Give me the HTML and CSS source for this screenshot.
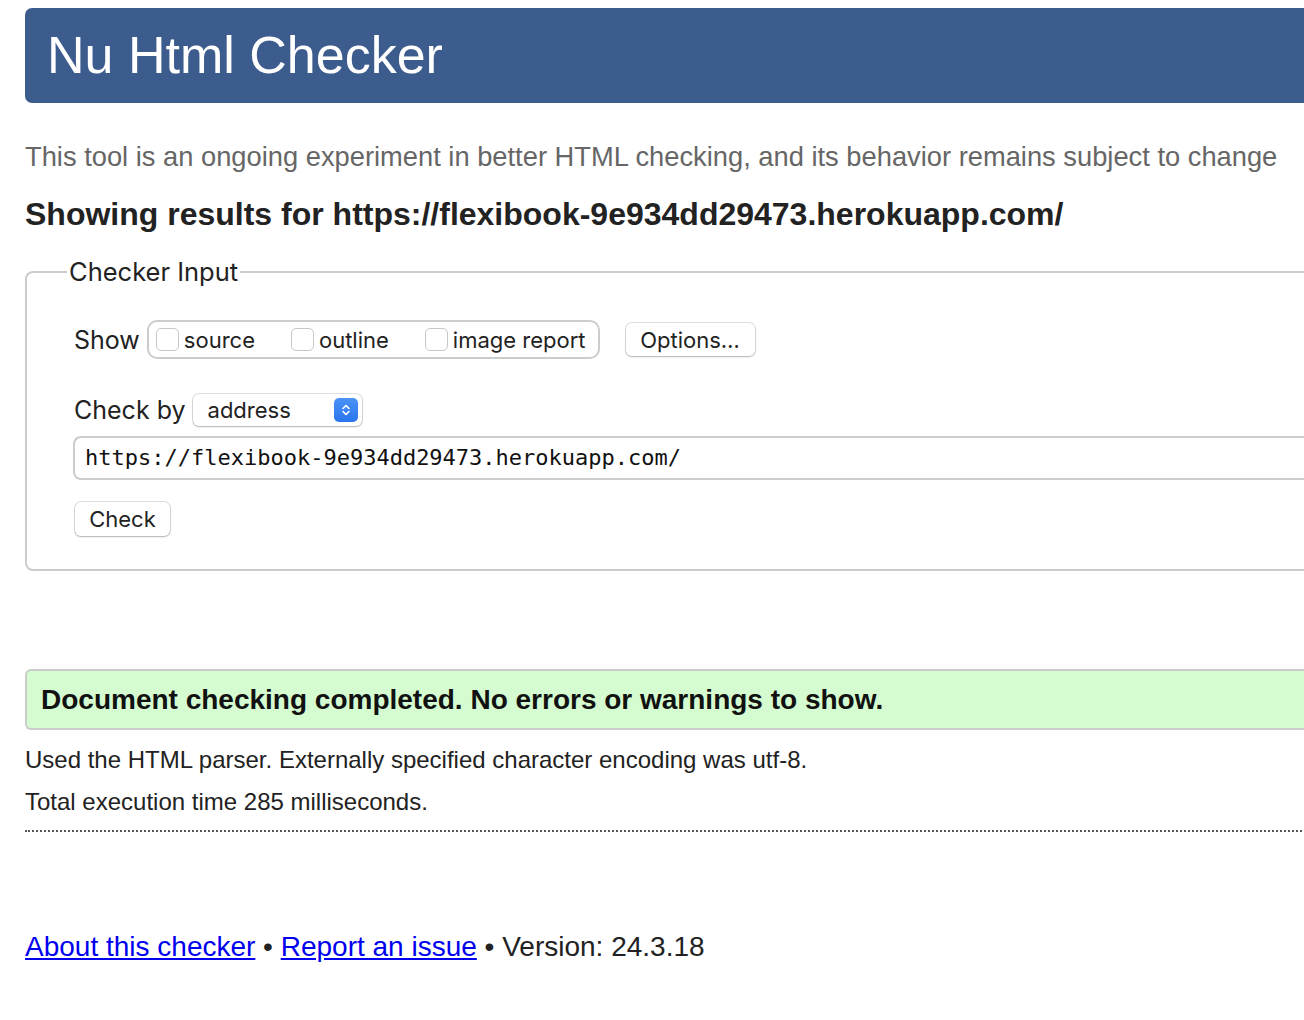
FILE: index.html
```html
<!DOCTYPE html>
<html>
<head>
<meta charset="utf-8">
<title>Nu Html Checker</title>
<link rel="stylesheet" href="styles.css">
</head>
<body>
<div class="page">
  <h1 class="banner">Nu Html Checker</h1>
  <p class="intro">This tool is an ongoing experiment in better HTML checking, and its behavior remains subject to change</p>
  <h2 class="showing">Showing results for https://flexibook-9e934dd29473.herokuapp.com/</h2>

  <fieldset class="input-set">
    <legend>Checker Input</legend>
    <div class="row show-row">
      <span class="label">Show</span>
      <span class="check-group">
        <label class="opt"><span class="box"></span>source</label>
        <label class="opt"><span class="box"></span>outline</label>
        <label class="opt"><span class="box"></span>image report</label>
      </span>
      <span class="btn options-btn">Options…</span>
    </div>
    <div class="row by-row">
      <span class="label">Check by</span>
      <span class="select">address
        <span class="sel-arrow"><svg width="10" height="14" viewBox="0 0 10 14"><path d="M2 5.5 L5 2.5 L8 5.5 M2 8.5 L5 11.5 L8 8.5" fill="none" stroke="#fff" stroke-width="1.6" stroke-linecap="round" stroke-linejoin="round"/></svg></span>
      </span>
    </div>
    <div class="url">https://flexibook-9e934dd29473.herokuapp.com/</div>
    <span class="btn check-btn">Check</span>
  </fieldset>

  <div class="success">Document checking completed. No errors or warnings to show.</div>
  <p class="details">Used the HTML parser. Externally specified character encoding was utf-8.</p>
  <p class="details">Total execution time 285 milliseconds.</p>
  <hr class="dotted">

  <p class="footer"><a href="#">About this checker</a> • <a href="#">Report an issue</a> • Version: 24.3.18</p>
</div>
</body>
</html>
```

FILE: styles.css
```css
html, body {
  margin: 0;
  padding: 0;
  overflow: hidden;
  background: #fff;
}
body {
  font-family: "Liberation Sans", Arial, sans-serif;
  color: #222;
}
.page {
  width: 1340px;
  padding: 8px 0 0 25px;
}
.banner {
  margin: 0;
  height: 95px;
  box-sizing: border-box;
  background: #3d5c8e;
  color: #fff;
  font-weight: normal;
  font-size: 52px;
  line-height: 95px;
  padding-left: 22px;
  border-radius: 7px 0 0 7px;
}
.intro {
  margin: 38px 0 0;
  font-size: 27.3px;
  line-height: 32px;
  color: #666;
}
.showing {
  margin: 23px 0 0;
  font-size: 32px;
  line-height: 36px;
  color: #222;
}
.input-set {
  margin: 24px 0 0;
  border: 2px solid #ccc;
  border-right: none;
  border-radius: 8px 0 0 8px;
  padding: 33px 0 0 47px;
  font-family: Inter, "Noto Sans", sans-serif;
  color: #222;
  height: 315px;
  box-sizing: border-box;
}
.input-set legend {
  font-size: 25.5px;
  padding: 0 2px;
  margin-left: -7px;
}
.row {
  display: flex;
  align-items: center;
}
.label {
  font-size: 25px;
  margin-right: 7px;
}
.check-group {
  display: flex;
  align-items: center;
  border: 2px solid #ccc;
  border-radius: 10px;
  height: 39px;
  box-sizing: border-box;
  padding: 0 12px 0 7px;
  font-size: 22px;
  gap: 36px;
}
.opt {
  display: flex;
  align-items: center;
}
.box {
  width: 23px;
  height: 23px;
  box-sizing: border-box;
  border: 1px solid #c8c8c8;
  border-radius: 5px;
  margin-right: 5px;
  background: #fff;
}
.btn {
  display: inline-flex;
  align-items: center;
  justify-content: center;
  background: #fff;
  border-radius: 6px;
  box-shadow: 0 0 0 1px rgba(0,0,0,0.12), 0 1px 2px rgba(0,0,0,0.2);
  font-size: 22px;
  height: 33px;
  box-sizing: border-box;
}
.options-btn {
  margin-left: 26px;
  width: 129px;
}
.by-row {
  margin-top: 35px;
}
.select {
  position: relative;
  display: inline-flex;
  align-items: center;
  width: 169px;
  height: 32px;
  box-sizing: border-box;
  padding-left: 15px;
  border-radius: 6px;
  box-shadow: 0 0 0 1px rgba(0,0,0,0.12), 0 1px 2px rgba(0,0,0,0.2);
  font-size: 22px;
}
.sel-arrow {
  position: absolute;
  right: 4px;
  top: 4px;
  width: 24px;
  height: 24px;
  border-radius: 5px;
  background: linear-gradient(#4b93f7, #2a74ee);
  display: flex;
  align-items: center;
  justify-content: center;
}
.url {
  margin-top: 10px;
  margin-left: -1px;
  height: 44px;
  box-sizing: border-box;
  border: 2px solid #ccc;
  border-right: none;
  border-radius: 8px 0 0 8px;
  padding-left: 10px;
  font-family: "DejaVu Sans Mono", monospace;
  font-size: 22px;
  line-height: 40px;
  color: #111;
}
.check-btn {
  margin-top: 22px;
  margin-left: 1px;
  width: 95px;
  height: 34px;
}
.success {
  margin-top: 98px;
  height: 61px;
  box-sizing: border-box;
  border: 2px solid #ccc;
  border-right: none;
  border-radius: 6px 0 0 6px;
  background: #d5fcd0;
  padding-left: 14px;
  font-weight: bold;
  font-size: 28px;
  line-height: 57px;
  color: #111;
}
.details {
  margin: 16px 0 0;
  font-size: 24px;
  line-height: 28px;
}
.details + .details {
  margin-top: 14px;
}
.dotted {
  margin: 14px 0 0;
  border: none;
  border-top: 2px dotted #555;
  height: 0;
}
.footer {
  margin: 99px 0 0;
  font-size: 28px;
  line-height: 32px;
}
.footer a {
  color: #0000ee;
}
```
